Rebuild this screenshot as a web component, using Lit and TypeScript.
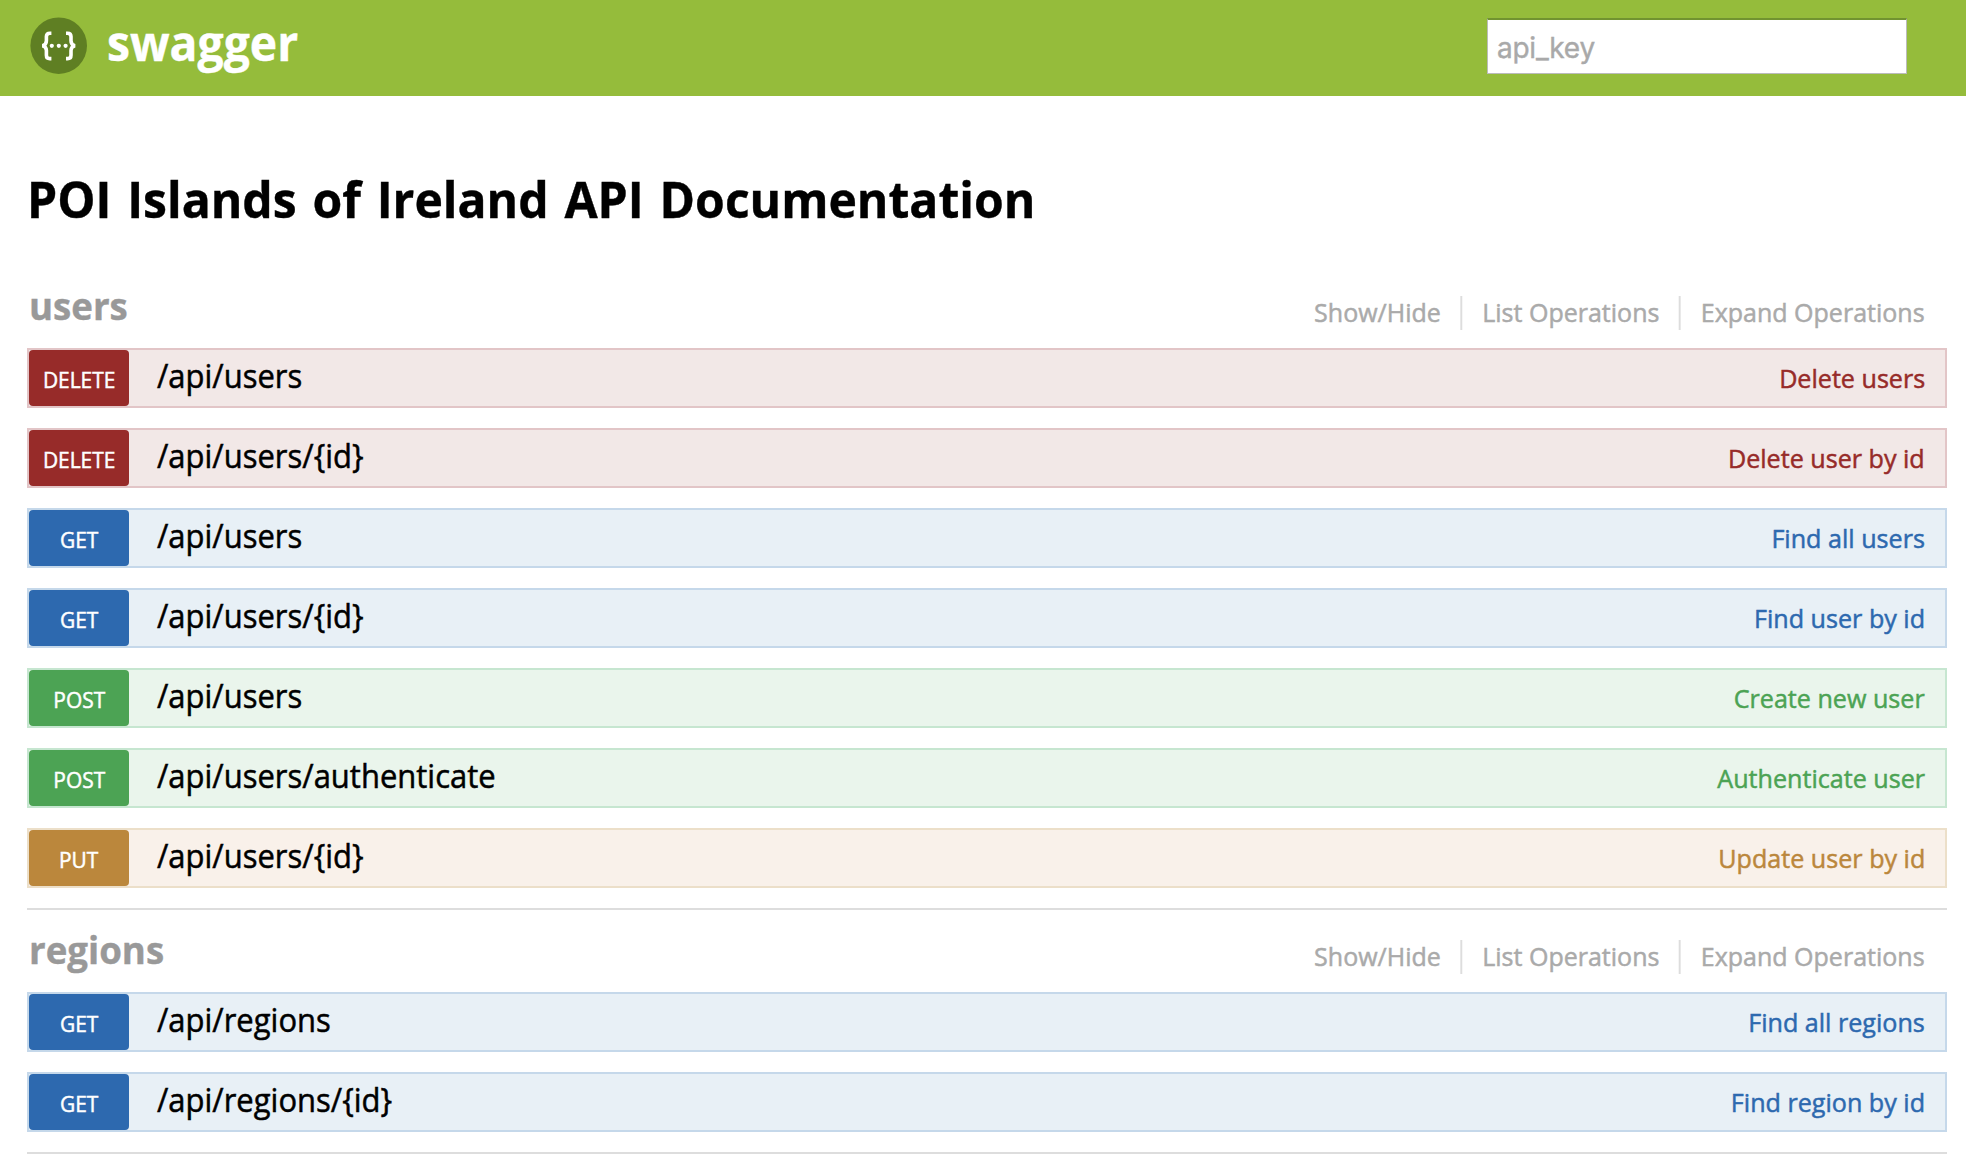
import { LitElement, html, css } from 'lit';
import { customElement, property } from 'lit/decorators.js';

type Method = 'delete' | 'get' | 'post' | 'put';

interface Operation {
  method: Method;
  path: string;
  summary: string;
}

interface Resource {
  name: string;
  operations: Operation[];
}

const RESOURCES: Resource[] = [
  {
    name: 'users',
    operations: [
      { method: 'delete', path: '/api/users', summary: 'Delete users' },
      { method: 'delete', path: '/api/users/{id}', summary: 'Delete user by id' },
      { method: 'get', path: '/api/users', summary: 'Find all users' },
      { method: 'get', path: '/api/users/{id}', summary: 'Find user by id' },
      { method: 'post', path: '/api/users', summary: 'Create new user' },
      { method: 'post', path: '/api/users/authenticate', summary: 'Authenticate user' },
      { method: 'put', path: '/api/users/{id}', summary: 'Update user by id' },
    ],
  },
  {
    name: 'regions',
    operations: [
      { method: 'get', path: '/api/regions', summary: 'Find all regions' },
      { method: 'get', path: '/api/regions/{id}', summary: 'Find region by id' },
    ],
  },
];

@customElement('api-operation')
export class ApiOperation extends LitElement {
  @property({ attribute: false }) operation!: Operation;

  static styles = css`
    :host {
      display: block;
    }
    .row {
      box-sizing: border-box;
      display: flex;
      height: 60px;
      border: 2px solid var(--edge);
      background: var(--fill);
      -webkit-text-stroke-width: 0.5px;
    }
    .delete {
      --main: #972b29;
      --fill: #f2e8e7;
      --edge: #e2c5c7;
    }
    .get {
      --main: #2d69af;
      --fill: #e8f0f6;
      --edge: #c5d8ea;
    }
    .post {
      --main: #4ca354;
      --fill: #eaf5ec;
      --edge: #c6e6d0;
    }
    .put {
      --main: #bb873c;
      --fill: #f9f1ea;
      --edge: #ecdfc9;
    }
    .method {
      flex: none;
      width: 100px;
      height: 56px;
      border-radius: 4px;
      background: var(--main);
      color: #fff;
      font-size: 22px;
      line-height: 59px;
      text-align: center;
    }
    .method span {
      display: inline-block;
      transform: scaleX(0.95);
    }
    .path {
      margin-left: 28px;
      color: #000;
      font-size: 32px;
      line-height: 51px;
      transform: scaleX(0.968);
      transform-origin: left;
    }
    .summary {
      margin-left: auto;
      margin-right: 20px;
      color: var(--main);
      font-size: 26px;
      line-height: 56px;
      transform: scaleX(0.966);
      transform-origin: right;
    }
  `;

  render() {
    const { method, path, summary } = this.operation;
    return html`
      <div class="row ${method}">
        <div class="method"><span>${method.toUpperCase()}</span></div>
        <div class="path">${path}</div>
        <div class="summary">${summary}</div>
      </div>
    `;
  }
}

@customElement('api-resource')
export class ApiResource extends LitElement {
  @property({ attribute: false }) resource!: Resource;

  static styles = css`
    :host {
      display: block;
      border-bottom: 2px solid #ddd;
      padding-bottom: 20px;
    }
    .heading {
      display: flex;
      height: 82px;
      align-items: flex-start;
      justify-content: space-between;
    }
    h2 {
      margin: 13px 0 0 2px;
      color: #999;
      font-size: 38px;
      font-weight: 700;
      line-height: 52px;
      -webkit-text-stroke-width: 0.4px;
      transform: scaleX(0.964);
      transform-origin: left;
    }
    .options {
      display: flex;
      margin: 30px 22px 0 0;
      padding: 0;
      list-style: none;
      color: #aaa;
      font-size: 26px;
      line-height: 32px;
      -webkit-text-stroke-width: 0.5px;
      transform: scaleX(0.962);
      transform-origin: right;
    }
    .options li {
      padding-bottom: 2px;
    }
    .options li + li {
      margin-left: 20.5px;
      padding-left: 20.5px;
      border-left: 2px solid #ddd;
    }
    .operations {
      display: flex;
      flex-direction: column;
      gap: 20px;
    }
  `;

  render() {
    return html`
      <div class="heading">
        <h2>${this.resource.name}</h2>
        <ul class="options">
          <li>Show/Hide</li>
          <li>List Operations</li>
          <li>Expand Operations</li>
        </ul>
      </div>
      <div class="operations">
        ${this.resource.operations.map(
          (op) => html`<api-operation .operation=${op}></api-operation>`,
        )}
      </div>
    `;
  }
}

@customElement('app-root')
export class AppRoot extends LitElement {
  static styles = css`
    :host {
      display: block;
      height: 1156px;
      overflow: hidden;
      background: #fff;
      font-family: 'Open Sans', 'Noto Sans', sans-serif;
    }
    header {
      box-sizing: border-box;
      display: flex;
      justify-content: space-between;
      height: 96px;
      padding: 0 59px 0 30px;
      background: #95bc3b;
    }
    .brand {
      display: flex;
      color: #fff;
      font-size: 48px;
      font-weight: 700;
      line-height: 85px;
      -webkit-text-stroke-width: 0.4px;
    }
    .brand svg {
      width: 58px;
      height: 58px;
      margin: 17px 19px 0 0;
    }
    .brand span {
      transform: scaleX(0.964);
      transform-origin: left;
    }
    input {
      box-sizing: border-box;
      width: 420px;
      height: 56px;
      margin: 18px 0 0;
      padding: 2px 0 0 9px;
      border: 1px solid #bbb;
      border-top: 2px solid #719330;
      border-radius: 0;
      background: #fff;
      font: 400 28px Inter, 'Liberation Sans', sans-serif;
      letter-spacing: -0.25px;
      -webkit-text-stroke-width: 0.4px;
      outline: none;
    }
    input::placeholder {
      color: #a9a9a9;
      opacity: 1;
    }
    main {
      padding: 0 19px 0 27px;
    }
    h1 {
      margin: 0;
      padding: 67px 0 33px;
      color: #000;
      font-size: 51px;
      font-weight: 700;
      line-height: 70px;
      word-spacing: 3.5px;
      white-space: nowrap;
      -webkit-text-stroke-width: 0.4px;
      transform: scaleX(0.943);
      transform-origin: left;
    }
  `;

  render() {
    return html`
      <header>
        <div class="brand">
          <svg viewBox="0 0 58 58" aria-hidden="true">
            <circle cx="28.7" cy="28.7" r="28.3" fill="#5f7f23" />
            <g fill="none" stroke="#fff" stroke-width="3.6">
              <path d="M21.4 16.2h-1.6q-3.4 0-3.4 3.4v4.2q0 4-4 4.9q4 .9 4 4.9v4.6q0 3.4 3.4 3.4h1.6" />
              <path d="M36 16.2h1.6q3.4 0 3.4 3.4v4.2q0 4 4 4.9q-4 .9-4 4.9v4.6q0 3.4-3.4 3.4H36" />
            </g>
            <g fill="#fff">
              <circle cx="21.8" cy="28.8" r="2.1" />
              <circle cx="28.8" cy="28.8" r="2.1" />
              <circle cx="35.6" cy="28.8" r="2.1" />
            </g>
          </svg>
          <span>swagger</span>
        </div>
        <input type="text" placeholder="api_key" />
      </header>
      <main>
        <h1>POI Islands of Ireland API Documentation</h1>
        ${RESOURCES.map((r) => html`<api-resource .resource=${r}></api-resource>`)}
      </main>
    `;
  }
}
